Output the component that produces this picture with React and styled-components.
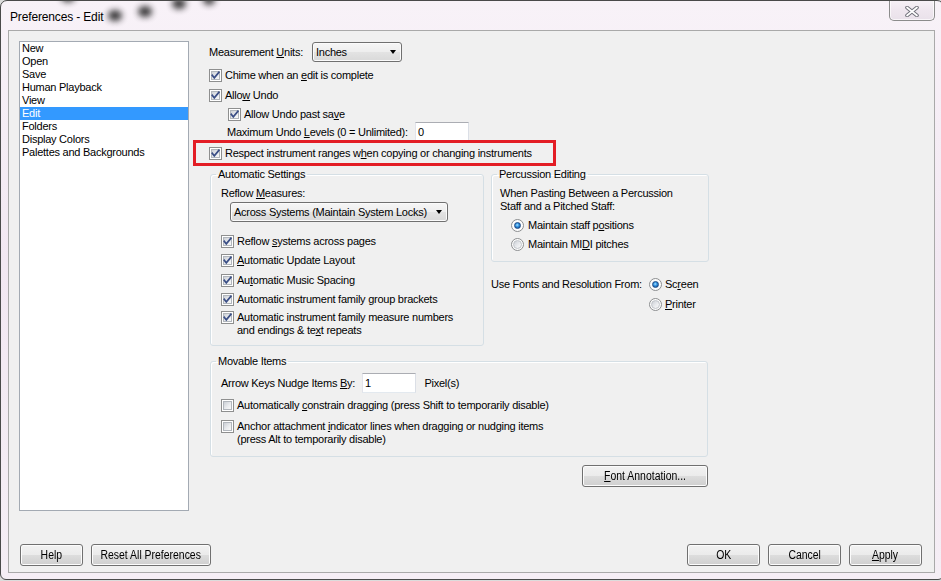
import React from 'react';
import styled, { createGlobalStyle } from 'styled-components';

const GlobalStyle = createGlobalStyle`
  html, body { margin: 0; padding: 0; background: #dcdcdc; overflow: hidden; }
  body {
    font-family: "Liberation Sans", Arial, sans-serif;
    font-size: 11px;
    letter-spacing: -0.25px;
    color: #000;
  }
  * { box-sizing: border-box; }
`;

const Window = styled.div`
  position: relative;
  width: 944px;
  height: 580px;
  border: 1px solid #4a4a4a;
  border-radius: 7px 7px 6px 6px;
  background: linear-gradient(180deg, #f8f2f8 0%, #f2e8f2 45%, #f5eef5 100%);
  padding: 0 8px 6px 7px;
  display: flex;
  flex-direction: column;
  overflow: hidden;
`;

const TitleBar = styled.div`
  height: 29px;
  flex: none;
  display: flex;
  align-items: flex-start;
`;

const Title = styled.div`
  padding: 9px 0 0 2px;
  font-size: 12px;
  line-height: 14px;
  letter-spacing: -0.15px;
  color: #000;
`;

const CloseButton = styled.div`
  margin-left: auto;
  margin-top: -1px;
  width: 46px;
  height: 21px;
  border: 1px solid #8c8c8c;
  border-top: none;
  border-radius: 0 0 5px 5px;
  background: linear-gradient(180deg, #f7f2f7 0%, #efe7ef 50%, #e9e1ea 100%);
  box-shadow: inset 0 0 0 1px rgba(255, 255, 255, 0.7);
  display: flex;
  align-items: center;
  justify-content: center;
  padding-top: 2px;
`;

const Smudge = styled.span`
  position: absolute;
  left: ${p => p.$x - p.$r}px;
  top: ${p => p.$y - p.$r}px;
  width: ${p => p.$r * 2}px;
  height: ${p => p.$r * 1.6}px;
  border-radius: 50%;
  background: #1a1a1a;
  filter: blur(3px);
  opacity: 0.85;
  pointer-events: none;
`;

const Client = styled.div`
  flex: 1;
  display: flex;
  flex-direction: column;
  background: #f0f0f0;
  border: 1px solid #a9a9a9;
  padding: 10px 12px 0 10px;
`;

const Main = styled.div`
  display: flex;
  height: 470px;
  flex: none;
`;

const PageList = styled.ul`
  list-style: none;
  margin: 0;
  padding: 0;
  width: 170px;
  height: 100%;
  background: #fff;
  border: 1px solid #a3aab3;
`;

const PageItem = styled.li`
  height: 13px;
  line-height: 13px;
  padding-left: 2px;
  white-space: nowrap;
  background: ${p => (p.$selected ? '#3399ff' : 'transparent')};
  color: ${p => (p.$selected ? '#fff' : '#000')};
`;

const Panel = styled.div`
  margin-left: 4px;
  width: 515px;
  display: flex;
  flex-direction: column;
`;

const Row = styled.div`
  display: flex;
  align-items: ${p => (p.$multi ? 'flex-start' : 'center')};
  gap: ${p => p.$gap ?? 3}px;
  height: ${p => (p.$multi ? 'auto' : `${p.$h ?? 16}px`)};
  margin-top: ${p => p.$mt ?? 0}px;
  padding-left: ${p => p.$indent ?? 0}px;
  flex: none;
`;

const Highlight = styled.div`
  display: flex;
  align-items: center;
  gap: 3px;
  width: 363px;
  height: 26px;
  margin-top: -2px;
  border: 3px solid #e31d25;
  padding-left: 13px;
  flex: none;
`;

const Text = styled.span`
  line-height: 13px;
  white-space: nowrap;
  width: ${p => (p.$w ? `${p.$w}px` : 'auto')};
  flex: none;
`;

const MultiText = styled.span`
  line-height: 13px;
  white-space: nowrap;
`;

const Key = styled.u`
  text-decoration: underline;
  text-underline-offset: 1px;
`;

const Select = styled.div`
  width: ${p => p.$w}px;
  height: 20px;
  margin-left: ${p => p.$ml ?? 0}px;
  margin-top: ${p => p.$mt ?? 0}px;
  border: 1px solid #707070;
  border-radius: 3px;
  background: linear-gradient(180deg, #f6f6f6 0%, #eeeeee 48%, #e3e3e3 52%, #d9d9d9 100%);
  box-shadow: inset 0 0 0 1px #fbfbfb;
  display: flex;
  align-items: center;
  justify-content: space-between;
  padding: 0 5px 0 3px;
  flex: none;
  line-height: 13px;
  white-space: nowrap;
`;

const Arrow = styled.span`
  width: 0;
  height: 0;
  border-left: 3.5px solid transparent;
  border-right: 3.5px solid transparent;
  border-top: 4px solid #000;
  flex: none;
`;

const TextBox = styled.div`
  width: ${p => p.$w}px;
  height: 20px;
  background: #fff;
  border: 1px solid;
  border-color: #abadb3 #dbdfe6 #e3e9ef #e2e3ea;
  padding: 0 2px;
  display: flex;
  align-items: center;
  line-height: 13px;
  flex: none;
`;

const BoxOuter = styled.span`
  position: relative;
  display: block;
  flex: none;
  width: 13px;
  height: 13px;
  border: 1px solid #8e8f8f;
  background: #fff;
  padding: 1px;
  margin-top: ${p => p.$mt ?? 0}px;
`;

const BoxInner = styled.span`
  display: block;
  width: 9px;
  height: 9px;
  border: 1px solid #b1b6bc;
  background: linear-gradient(135deg, #cbcfd5 0%, #e9ebee 55%, #f9f9f9 100%);
`;

const CheckMark = styled.svg`
  position: absolute;
  left: -1px;
  top: -1px;
`;

const RadioOuter = styled.span`
  flex: none;
  width: 13px;
  height: 13px;
  border-radius: 50%;
  border: 1px solid #8c8e90;
  background: #fdfdfd;
  display: flex;
  align-items: center;
  justify-content: center;
`;

const RadioDot = styled.span`
  width: ${p => (p.$on ? 7 : 9)}px;
  height: ${p => (p.$on ? 7 : 9)}px;
  border-radius: 50%;
  border: 1px solid ${p => (p.$on ? '#1c4a86' : '#c0c4c9')};
  background: ${p =>
    p.$on
      ? 'radial-gradient(circle at 45% 40%, #b5e4ff 0%, #3d9fe8 35%, #13529f 85%)'
      : 'linear-gradient(135deg, #cbcfd5 0%, #e9ebee 55%, #f9f9f9 100%)'};
`;

const GroupsRow = styled.div`
  display: flex;
  gap: 7px;
  margin-top: 2px;
  margin-left: 17px;
  flex: none;
`;

const Group = styled.fieldset`
  margin: ${p => `${p.$mt ?? 0}px 0 0 ${p.$ml ?? 0}px`};
  padding: 0;
  width: ${p => p.$w}px;
  height: ${p => p.$h}px;
  border: 1px solid #d5dfe5;
  border-radius: 3px;
  box-shadow: inset 1px 1px 0 #fff;
  flex: none;
  min-width: 0;
`;

const Legend = styled.legend`
  margin-left: 5px;
  padding: 0 2px;
  line-height: 13px;
  font-size: 11px;
`;

const GroupBody = styled.div`
  display: flex;
  flex-direction: column;
  padding-left: ${p => p.$pl ?? 10}px;
`;

const SideColumn = styled.div`
  display: flex;
  flex-direction: column;
  width: 218px;
`;

const RadioColumn = styled.div`
  display: flex;
  flex-direction: column;
  gap: 4px;
`;

const Button = styled.button`
  width: ${p => p.$w}px;
  height: 22px;
  margin-top: ${p => p.$mt ?? 0}px;
  align-self: ${p => p.$align ?? 'auto'};
  border: 1px solid #707070;
  border-radius: 3px;
  background: linear-gradient(180deg, #f2f2f2 0%, #ebebeb 50%, #dddddd 51%, #cfcfcf 100%);
  box-shadow: inset 0 0 0 1px #fcfcfc;
  font-family: "Liberation Sans", Arial, sans-serif;
  font-size: 12px;
  letter-spacing: 0;
  color: #000;
  padding: 0;
  display: flex;
  align-items: center;
  justify-content: center;
  flex: none;
`;

const ButtonLabel = styled.span`
  display: inline-block;
  transform: scaleX(0.87);
  white-space: nowrap;
  line-height: 14px;
`;

const Footer = styled.div`
  display: flex;
  gap: 8px;
  margin-top: 33px;
  padding-left: 1px;
  flex: none;
`;

const Spacer = styled.div`
  flex: 1;
`;

const Check = ({ checked = true, mt }) => (
  <BoxOuter $mt={mt}>
    <BoxInner />
    {checked && (
      <CheckMark width="13" height="13" viewBox="0 0 13 13">
        <path
          d="M3.3 6.3 L5.3 8.9 L9.9 3.3"
          fill="none"
          stroke="#3b4f86"
          strokeWidth="1.7"
          strokeLinecap="square"
          strokeLinejoin="miter"
        />
      </CheckMark>
    )}
  </BoxOuter>
);

const Radio = ({ on }) => (
  <RadioOuter>
    <RadioDot $on={on} />
  </RadioOuter>
);

const pages = ['New', 'Open', 'Save', 'Human Playback', 'View', 'Edit', 'Folders', 'Display Colors', 'Palettes and Backgrounds'];

export default function App() {
  return (
    <>
      <GlobalStyle />
      <Window>
        <Smudge $x={67} $y={-3} $r={7} />
        <Smudge $x={114} $y={16} $r={7} />
        <Smudge $x={144} $y={12} $r={7} />
        <Smudge $x={178} $y={4} $r={7} />
        <Smudge $x={208} $y={0} $r={6} />
        <TitleBar>
          <Title>Preferences - Edit</Title>
          <CloseButton>
            <svg width="16" height="11" viewBox="0 0 16 11">
              <path d="M3 1.5 L13 9.5 M13 1.5 L3 9.5" stroke="#6f6f78" strokeWidth="3.6" strokeLinecap="round" />
              <path d="M3 1.5 L13 9.5 M13 1.5 L3 9.5" stroke="#ffffff" strokeWidth="1.7" strokeLinecap="round" />
            </svg>
          </CloseButton>
        </TitleBar>
        <Client>
          <Main>
            <PageList>
              {pages.map(p => (
                <PageItem key={p} $selected={p === 'Edit'}>{p}</PageItem>
              ))}
            </PageList>
            <Panel>
              <Row $h={20} $mt={1} $indent={16} $gap={9}>
                <Text>Measurement <Key>U</Key>nits:</Text>
                <Select $w={90}>
                  <span>Inches</span>
                  <Arrow />
                </Select>
              </Row>
              <Row $mt={5} $indent={16}>
                <Check />
                <Text>Chime when an <Key>e</Key>dit is complete</Text>
              </Row>
              <Row $mt={4} $indent={16}>
                <Check />
                <Text>Allo<Key>w</Key> Undo</Text>
              </Row>
              <Row $mt={3} $indent={35}>
                <Check />
                <Text>Allow Undo past sa<Key>v</Key>e</Text>
              </Row>
              <Row $h={20} $indent={34} $gap={0}>
                <Text $w={188}>Maximum Undo <Key>L</Key>evels (0 = Unlimited):</Text>
                <TextBox $w={54}>0</TextBox>
              </Row>
              <Highlight>
                <Check />
                <Text>Respect instrument ranges w<Key>h</Key>en copying or changing instruments</Text>
              </Highlight>

              <GroupsRow>
                <Group $w={274} $h={178}>
                  <Legend>Automatic Settings</Legend>
                  <GroupBody>
                    <Row $h={13} $mt={6}>
                      <Text>Reflow <Key>M</Key>easures:</Text>
                    </Row>
                    <Select $w={218} $ml={9} $mt={2}>
                      <span>Across Systems (Maintain System Locks)</span>
                      <Arrow />
                    </Select>
                    <Row $mt={11}>
                      <Check />
                      <Text>Reflow <Key>s</Key>ystems across pages</Text>
                    </Row>
                    <Row $mt={3}>
                      <Check />
                      <Text><Key>A</Key>utomatic Update Layout</Text>
                    </Row>
                    <Row $mt={4}>
                      <Check />
                      <Text>Au<Key>t</Key>omatic Music Spacing</Text>
                    </Row>
                    <Row $mt={3}>
                      <Check />
                      <Text>Automatic instrument family <Key>g</Key>roup brackets</Text>
                    </Row>
                    <Row $mt={4} $multi>
                      <Check mt={0} />
                      <MultiText>
                        Automatic instrument family measure numbers
                        <br />
                        and endings &amp; te<Key>x</Key>t repeats
                      </MultiText>
                    </Row>
                  </GroupBody>
                </Group>

                <SideColumn>
                  <Group $w={218} $h={94}>
                    <Legend>Percussion Editing</Legend>
                    <GroupBody $pl={8}>
                      <Row $multi $mt={6}>
                        <MultiText>
                          When Pasting Between a Percussion
                          <br />
                          Staff and a Pitched Staff:
                        </MultiText>
                      </Row>
                      <Row $mt={4} $indent={11} $gap={4}>
                        <Radio on />
                        <Text>Maintain staff p<Key>o</Key>sitions</Text>
                      </Row>
                      <Row $mt={3} $indent={11} $gap={4}>
                        <Radio />
                        <Text>Maintain MI<Key>D</Key>I pitches</Text>
                      </Row>
                    </GroupBody>
                  </Group>
                  <Row $multi $mt={14} $gap={0}>
                    <Row $gap={0}>
                      <Text $w={158}>Use Fonts and Resolution From:</Text>
                    </Row>
                    <RadioColumn>
                      <Row>
                        <Radio on />
                        <Text>Sc<Key>r</Key>een</Text>
                      </Row>
                      <Row>
                        <Radio />
                        <Text><Key>P</Key>rinter</Text>
                      </Row>
                    </RadioColumn>
                  </Row>
                </SideColumn>
              </GroupsRow>

              <Group $w={498} $h={102} $mt={9} $ml={17}>
                <Legend>Movable Items</Legend>
                <GroupBody>
                  <Row $h={20} $mt={5} $gap={0}>
                    <Text $w={141}>Arrow Keys Nudge Items <Key>B</Key>y:</Text>
                    <TextBox $w={54}>1</TextBox>
                    <Text $w={60}>&nbsp;&nbsp;&nbsp;Pixel(s)</Text>
                  </Row>
                  <Row $mt={4}>
                    <Check checked={false} />
                    <Text>Automatically <Key>c</Key>onstrain dragging (press Shift to temporarily disable)</Text>
                  </Row>
                  <Row $mt={7} $multi>
                    <Check checked={false} />
                    <MultiText>
                      Anchor attachment <Key>i</Key>ndicator lines when dragging or nudging items
                      <br />
                      (press Alt to temporarily disable)
                    </MultiText>
                  </Row>
                </GroupBody>
              </Group>

              <Button $w={126} $mt={8} $align="flex-end">
                <ButtonLabel><Key>F</Key>ont Annotation...</ButtonLabel>
              </Button>
            </Panel>
          </Main>
          <Footer>
            <Button $w={63}><ButtonLabel>Help</ButtonLabel></Button>
            <Button $w={120}><ButtonLabel>Reset All Preferences</ButtonLabel></Button>
            <Spacer />
            <Button $w={73}><ButtonLabel>OK</ButtonLabel></Button>
            <Button $w={73}><ButtonLabel>Cancel</ButtonLabel></Button>
            <Button $w={73}><ButtonLabel><Key>A</Key>pply</ButtonLabel></Button>
          </Footer>
        </Client>
      </Window>
    </>
  );
}
